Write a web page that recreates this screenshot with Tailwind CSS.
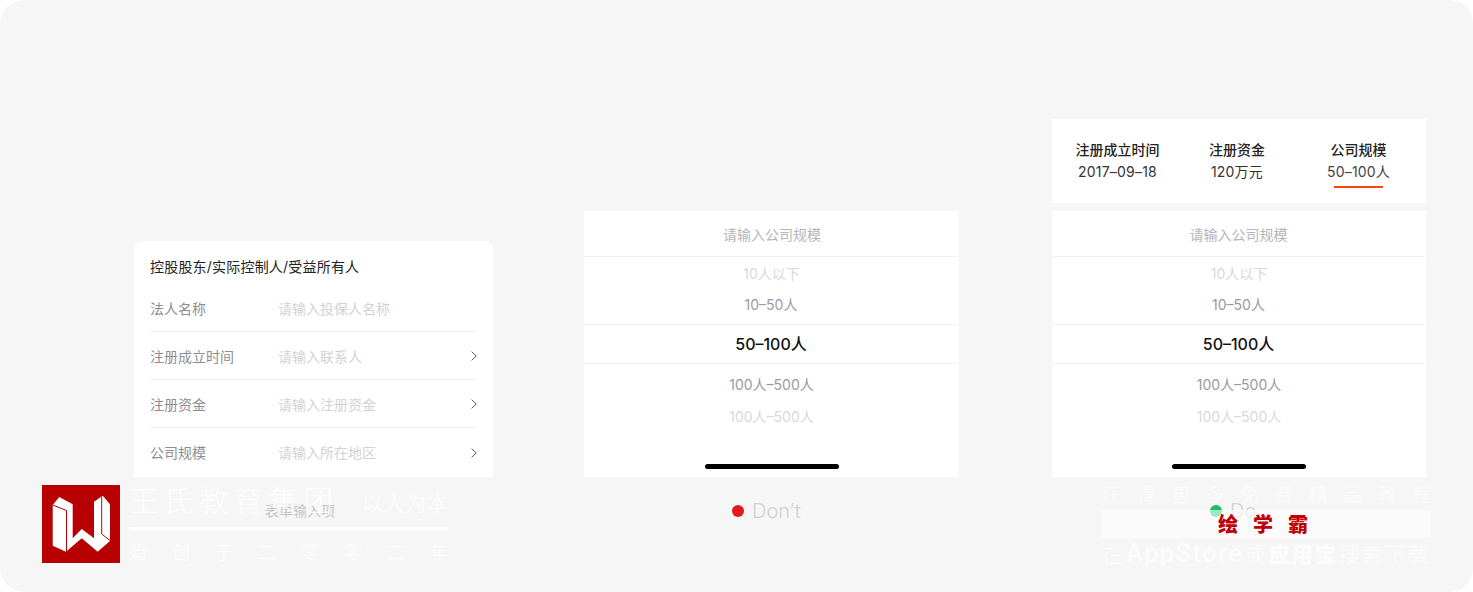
<!DOCTYPE html>
<html lang="zh">
<head>
<meta charset="utf-8">
<script src="https://cdn.jsdelivr.net/npm/@tailwindcss/browser@4"></script>
</head>
<body class="bg-white">
<div class="relative w-[1473px] h-[592px] overflow-hidden rounded-[24px] bg-[#f6f6f6] font-['Inter','Noto_Sans_CJK_SC',sans-serif]">
  <div class="flex items-end h-[477px] pl-[134px]">
    <!-- column 1 -->
    <div class="w-[359px] h-[236px] bg-white rounded-t-[8px] px-4 pt-[16px]">
      <div class="text-[14px] leading-[20px] tracking-[0.2px] text-[#222]">控股股东/实际控制人/受益所有人</div>
      <div class="flex items-center h-[48px] mt-[7px] pt-[1px] border-b border-[#f2f2f2] text-[14px]">
        <span class="w-[128px] text-[#8e8e93]">法人名称</span><span class="text-[#d2d2d6]">请输入投保人名称</span>
      </div>
      <div class="flex items-center h-[48px] pt-[1px] border-b border-[#f2f2f2] text-[14px]">
        <span class="w-[128px] text-[#8e8e93]">注册成立时间</span><span class="flex-1 text-[#d2d2d6]">请输入联系人</span>
        <svg class="w-[6px] h-[10px]" viewBox="0 0 6 10" fill="none" stroke="#55555c" stroke-width="1"><path d="M.6.6 5.2 5 .6 9.4"/></svg>
      </div>
      <div class="flex items-center h-[48px] pt-[1px] border-b border-[#f2f2f2] text-[14px]">
        <span class="w-[128px] text-[#8e8e93]">注册资金</span><span class="flex-1 text-[#d2d2d6]">请输入注册资金</span>
        <svg class="w-[6px] h-[10px]" viewBox="0 0 6 10" fill="none" stroke="#55555c" stroke-width="1"><path d="M.6.6 5.2 5 .6 9.4"/></svg>
      </div>
      <div class="flex items-center h-[48px] pt-[1px] text-[14px]">
        <span class="w-[128px] text-[#8e8e93]">公司规模</span><span class="flex-1 text-[#d2d2d6]">请输入所在地区</span>
        <svg class="w-[6px] h-[10px]" viewBox="0 0 6 10" fill="none" stroke="#55555c" stroke-width="1"><path d="M.6.6 5.2 5 .6 9.4"/></svg>
      </div>
    </div>

    <!-- column 2 -->
    <div class="w-[375px] h-[266px] ml-[91px] bg-white text-center flex flex-col">
      <div class="h-[46px] shrink-0 mr-[1px] pl-[2px] border-b border-[#f2f2f2] text-[14px] leading-[47px] text-[#b5b5ba]">请输入公司规模</div>
      <div class="h-[32px] mt-[1px] text-[14px] leading-[32px] text-[#d8d8dc]">10人以下</div>
      <div class="h-[35px] mr-[1px] text-[14px] leading-[30px] text-[#9a9aa0] border-b border-[#f2f2f2]">10–50人</div>
      <div class="h-[39px] mr-[1px] text-[16px] leading-[38px] font-medium text-[#111] border-b border-[#f2f2f2]">50–100人</div>
      <div class="h-[40px] text-[14px] leading-[41px] text-[#9a9aa0]">100人–500人</div>
      <div class="h-[24px] text-[14px] leading-[25px] text-[#d8d8dc]">100人–500人</div>
      <div class="mt-[36px] mx-auto w-[134px] h-[5px] rounded-full bg-black"></div>
    </div>

    <!-- column 3 -->
    <div class="w-[374px] ml-[93px] flex flex-col gap-[8px]">
      <div class="h-[84px] bg-white flex pt-[21px] text-center">
        <div class="w-[131px]">
          <div class="text-[14px] leading-[20px] font-medium text-[#222]">注册成立时间</div>
          <div class="text-[14px] leading-[24px] tracking-[0.2px] text-[#333]">2017–09–18</div>
        </div>
        <div class="w-[108px]">
          <div class="text-[14px] leading-[20px] font-medium text-[#222]">注册资金</div>
          <div class="text-[14px] leading-[24px] tracking-[0.2px] text-[#333]">120万元</div>
        </div>
        <div class="w-[135px] flex flex-col items-center">
          <div class="text-[14px] leading-[20px] font-medium text-[#222]">公司规模</div>
          <div class="text-[14px] leading-[24px] tracking-[0.2px] text-[#444]">50–100人</div>
          <div class="mt-[2px] w-[49px] h-[2px] bg-[#f0480f]"></div>
        </div>
      </div>
      <div class="h-[266px] bg-white text-center flex flex-col">
        <div class="h-[46px] shrink-0 mr-[1px] border-b border-[#f2f2f2] text-[14px] leading-[47px] text-[#b5b5ba]">请输入公司规模</div>
        <div class="h-[32px] mt-[1px] text-[14px] leading-[32px] text-[#d8d8dc]">10人以下</div>
        <div class="h-[35px] mr-[1px] text-[14px] leading-[30px] text-[#9a9aa0] border-b border-[#f2f2f2]">10–50人</div>
        <div class="h-[39px] mr-[1px] text-[16px] leading-[38px] font-medium text-[#111] border-b border-[#f2f2f2]">50–100人</div>
        <div class="h-[40px] text-[14px] leading-[41px] text-[#9a9aa0]">100人–500人</div>
        <div class="h-[24px] text-[14px] leading-[25px] text-[#d8d8dc]">100人–500人</div>
        <div class="mt-[36px] ml-[120px] w-[134px] h-[5px] rounded-full bg-black"></div>
      </div>
    </div>
  </div>

  <!-- captions -->
  <div class="absolute left-[134px] top-[501px] w-[332px] text-center text-[14px] leading-[20px] text-[#c4c4c4]">表单输入项</div>
  <div class="absolute left-[732px] top-[498px] flex items-center gap-[8px] text-[20px] leading-[26px] font-light text-[#d0d0d4]">
    <span class="w-[12px] h-[12px] rounded-full bg-[#e01b1b]"></span><span>Don’t</span>
  </div>
  <div class="absolute left-[1210px] top-[498px] flex items-center gap-[8px] text-[20px] leading-[26px] font-light text-[#d0d0d4]">
    <span class="w-[12px] h-[12px] rounded-full bg-[#19c06b]"></span><span>Do</span>
  </div>

  <!-- watermark left -->
  <div class="absolute left-[42px] top-[485px] w-[78px] h-[78px] bg-[#b80003]">
    <svg width="78" height="78" viewBox="0 0 78 78">
      <path fill="#fff" d="M10.700 20 17.300 12 30.700 19.300 30.700 53.300 39.700 44 52 53.300 52 16.700 60.700 10.700 68 19.300 68 56 55.700 66.700 39.700 53.300 24 66.700 10.700 60.700Z"/>
      <path fill="none" stroke="#b80003" stroke-width="1" d="M10.700 20 24.500 25.500 24.500 66.700M59.700 11.700 59.700 49 68 55.500"/>
    </svg>
  </div>
  <div class="absolute left-[129px] top-[475px] w-[319px] text-white/80 font-['Noto_Sans_CJK_SC',sans-serif]">
    <div class="flex items-end justify-between h-[43px]">
      <span class="text-[29px] leading-[38px] tracking-[6px] font-light">王氏教育集团</span>
      <span class="text-[21.5px] leading-[33px] font-light">以人为本</span>
    </div>
    <div class="mt-[9px] h-[3px] bg-white"></div>
    <div class="mt-[8px] flex justify-between text-[18px] leading-[26px] font-light">
      <span>始</span><span>创</span><span>于</span><span>二</span><span>零</span><span>零</span><span>二</span><span>年</span>
    </div>
  </div>

  <!-- watermark right -->
  <div class="absolute left-[1102px] top-[481px] w-[329px] font-['Noto_Sans_CJK_SC',sans-serif]">
    <div class="flex justify-between text-[19px] leading-[26px] font-light text-white/70">
      <span>获</span><span>得</span><span>更</span><span>多</span><span>免</span><span>费</span><span>精</span><span>品</span><span>教</span><span>程</span>
    </div>
    <div class="mt-[3px] h-[28px] bg-white/60 flex items-center justify-center gap-[15px] pr-[7px] text-[20px] leading-[28px] font-black text-[#c00008]">
      <span>绘</span><span>学</span><span>霸</span>
    </div>
    <div class="mt-[1px] flex items-baseline justify-between text-[21px] leading-[28px] tracking-[2px] text-white/70 font-light whitespace-nowrap">
      <span>在</span><span class="text-[25px] font-['Roboto',sans-serif] font-medium tracking-[1.7px]">AppStore</span><span>或</span><span class="font-black">应用宝</span><span>搜索下载</span>
    </div>
  </div>
</div>
</body>
</html>
